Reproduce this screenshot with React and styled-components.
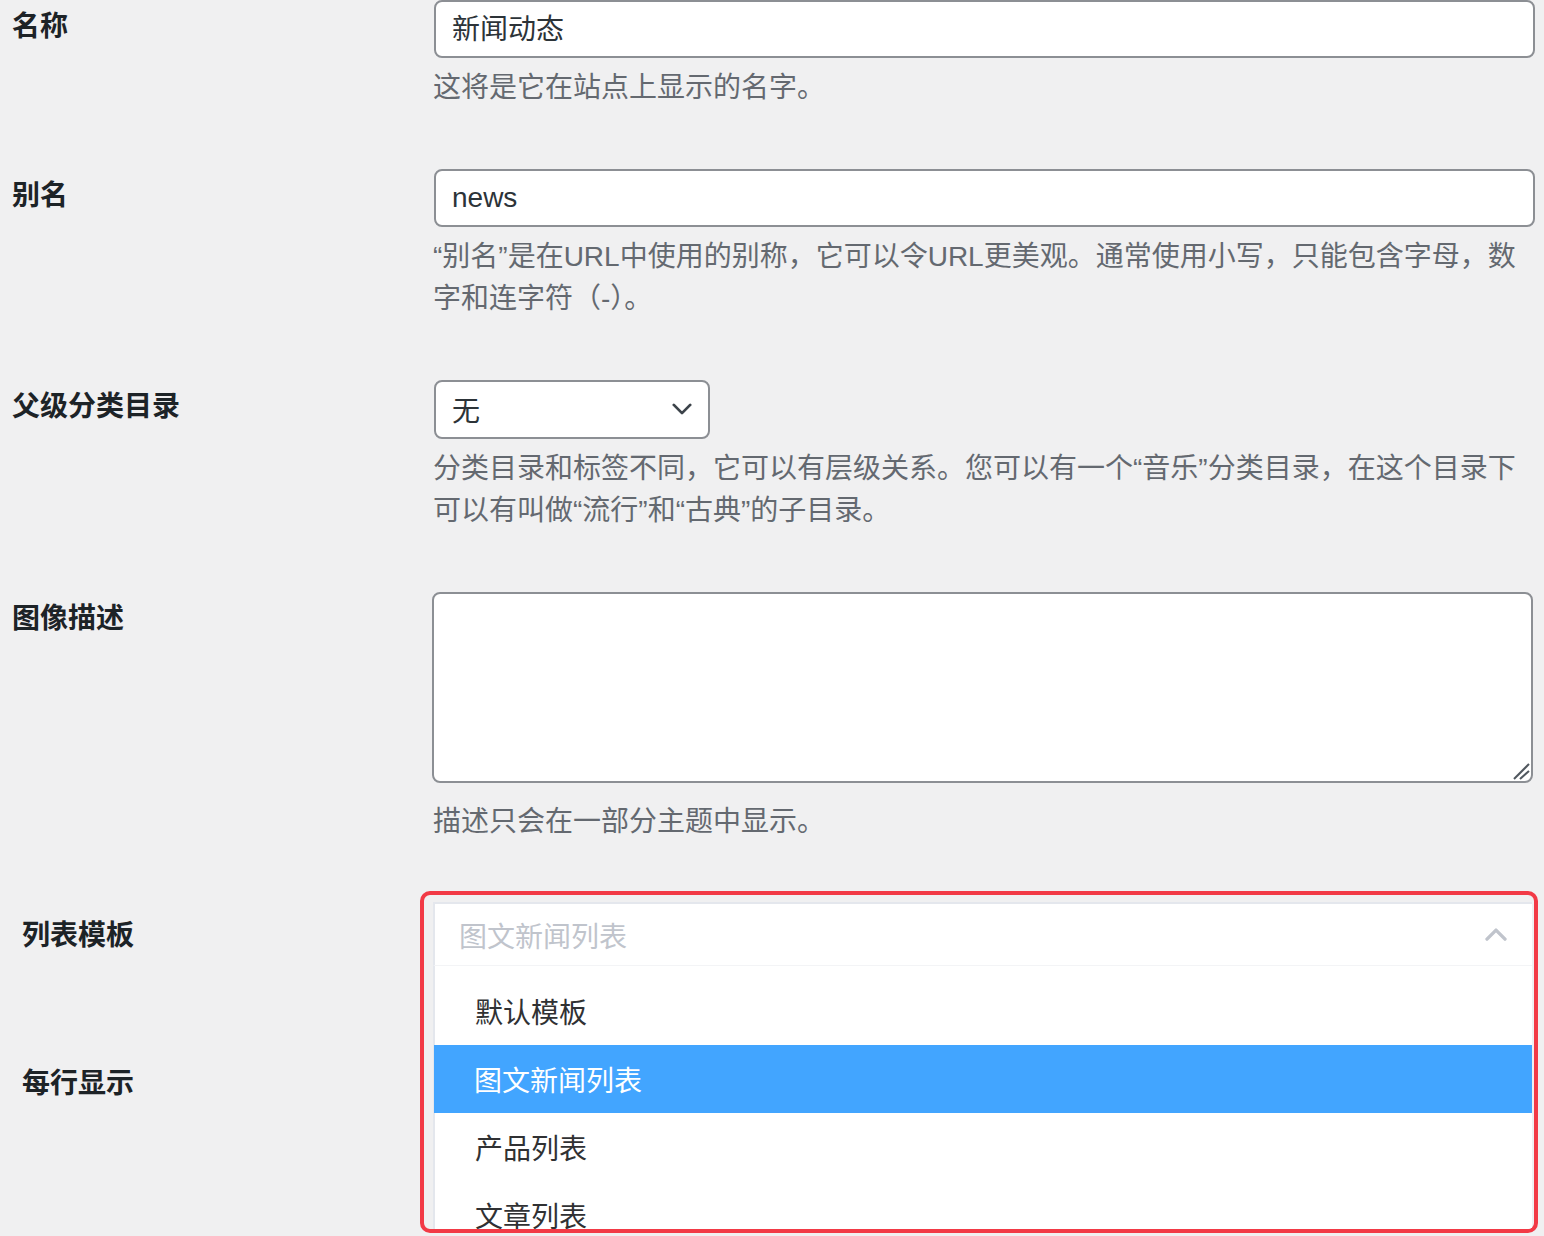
import React from 'react'
import styled, { createGlobalStyle } from 'styled-components'

const GlobalStyle = createGlobalStyle`
  html, body {
    margin: 0;
    padding: 0;
    background: #f0f0f1;
  }
  body {
    font-family: "Liberation Sans", "Noto Sans CJK SC", sans-serif;
    color: #2c3338;
  }
`;

const Page = styled.div`
  width: 1544px;
  height: 1236px;
  overflow: hidden;
  background: #f0f0f1;
`;

const Table = styled.div`
  padding: 0 9px 0 ${p => p.$left}px;
`;

const Row = styled.div`
  display: grid;
  grid-template-columns: ${p => p.$labelWidth}px 1fr;
  padding-bottom: ${p => p.$pb ?? 60}px;
  min-height: ${p => p.$minHeight ?? 0}px;
  box-sizing: border-box;
`;

const Label = styled.div`
  font-size: 28px;
  font-weight: 700;
  color: #1d2327;
  line-height: 40px;
  padding-top: ${p => p.$top ?? 7}px;
`;

const Field = styled.div`
  position: relative;
  min-width: 0;
`;

const TextInput = styled.input`
  display: block;
  box-sizing: border-box;
  width: 100%;
  height: 58px;
  margin: 0;
  padding: 0 16px ${p => p.$lift ?? 0}px;
  border: 2px solid #8c8f94;
  border-radius: 8px;
  background: #fff;
  font: inherit;
  font-size: 28px;
  color: #2c3338;
  outline: none;
`;

const SelectBox = styled.div`
  box-sizing: border-box;
  width: 276px;
  height: 59px;
  padding: 0 16px 2px 16px;
  border: 2px solid #8c8f94;
  border-radius: 8px;
  background: #fff;
  display: flex;
  align-items: center;
  justify-content: space-between;
  font-size: 28px;
  color: #2c3338;
`;

const AreaWrap = styled.div`
  position: relative;
  margin-left: -2px;
  margin-right: 2px;
`;

const TextArea = styled.textarea`
  display: block;
  box-sizing: border-box;
  width: 100%;
  height: 191px;
  margin: 0;
  padding: 8px 16px;
  border: 2px solid #8c8f94;
  border-radius: 8px;
  background: #fff;
  font: inherit;
  font-size: 28px;
  resize: none;
  outline: none;
`;

const Grip = styled.svg`
  position: absolute;
  right: 3px;
  bottom: 3px;
  pointer-events: none;
`;

const Description = styled.p`
  margin: ${p => p.$top ?? 9}px 0 0 -1px;
  font-size: 28px;
  line-height: 42px;
  color: #646970;
`;

const Annotation = styled.div`
  position: absolute;
  z-index: 2;
  top: 0;
  left: 0;
  right: -3px;
  height: 342px;
  box-sizing: border-box;
  padding: 7px 2px 0 9px;
  border: 4px solid #f23a46;
  border-radius: 10px;
  overflow: hidden;
  background: #f0f0f1;
`;

const DropHeader = styled.div`
  box-sizing: border-box;
  height: 64px;
  padding: 0 25px 0 24px;
  border-top: 2px solid #e4e7ed;
  border-left: 2px solid #e4e7ed;
  border-bottom: 1px solid #f3f4f6;
  background: #fff;
  display: flex;
  align-items: center;
  justify-content: space-between;
  font-size: 28px;
  color: #c0c4cc;
`;

const Menu = styled.ul`
  margin: 0;
  padding: 11px 0 0 0;
  list-style: none;
  background: #fff;
  border-left: 2px solid #e4e7ed;
  height: 400px;
`;

const Option = styled.li`
  height: 68px;
  padding-left: 40px;
  display: flex;
  align-items: center;
  font-size: 28px;
  color: ${p => (p.$active ? '#fff' : '#303133')};
  background: ${p => (p.$active ? '#42a5ff' : 'transparent')};
  margin-left: ${p => (p.$active ? '-1px' : '0')};
`;

function Chevron({ up, color, size = 22, weight = 3 }) {
  return (
    <svg width={size} height={size * 0.6} viewBox="0 0 22 13" fill="none">
      <polyline
        points={up ? '2,11 11,2 20,11' : '2,2 11,11 20,2'}
        stroke={color}
        strokeWidth={weight}
        strokeLinecap="round"
        strokeLinejoin="round"
      />
    </svg>
  )
}

const templates = ['默认模板', '图文新闻列表', '产品列表', '文章列表'];

export default function App() {
  return (
    <Page>
      <GlobalStyle />
      <Table $left={12}>
        <Row $labelWidth={422}>
          <Label>名称</Label>
          <Field>
            <TextInput defaultValue="新闻动态" readOnly $lift={4} />
            <Description>这将是它在站点上显示的名字。</Description>
          </Field>
        </Row>
        <Row $labelWidth={422}>
          <Label>别名</Label>
          <Field>
            <TextInput defaultValue="news" readOnly />
            <Description>
              “别名”是在URL中使用的别称，它可以令URL更美观。通常使用小写，只能包含字母，数
              <br />
              字和连字符（-）。
            </Description>
          </Field>
        </Row>
        <Row $labelWidth={422}>
          <Label>父级分类目录</Label>
          <Field>
            <SelectBox>
              <span>无</span>
              <Chevron color="#3c434a" size={20} />
            </SelectBox>
            <Description>
              分类目录和标签不同，它可以有层级关系。您可以有一个“音乐”分类目录，在这个目录下
              <br />
              可以有叫做“流行”和“古典”的子目录。
            </Description>
          </Field>
        </Row>
        <Row $labelWidth={422} $pb={48}>
          <Label>图像描述</Label>
          <Field>
            <AreaWrap>
              <TextArea readOnly />
              <Grip width="18" height="18" viewBox="0 0 18 18">
                <line x1="2" y1="17" x2="17" y2="2" stroke="#50575e" strokeWidth="2" />
                <line x1="8" y1="17" x2="17" y2="9" stroke="#50575e" strokeWidth="2" />
              </Grip>
            </AreaWrap>
            <Description $top={18}>描述只会在一部分主题中显示。</Description>
          </Field>
        </Row>
      </Table>

      <Table $left={22}>
        <Row $labelWidth={398} $pb={0} $minHeight={148}>
          <Label $top={25}>列表模板</Label>
          <Field>
            <Annotation>
              <DropHeader>
                <span>图文新闻列表</span>
                <Chevron up color="#c0c4cc" weight={3.4} />
              </DropHeader>
              <Menu>
                {templates.map((t, i) => (
                  <Option key={t} $active={i === 1}>{t}</Option>
                ))}
              </Menu>
            </Annotation>
          </Field>
        </Row>
        <Row $labelWidth={398} $pb={0}>
          <Label $top={25}>每行显示</Label>
          <Field />
        </Row>
      </Table>
    </Page>
  )
}
